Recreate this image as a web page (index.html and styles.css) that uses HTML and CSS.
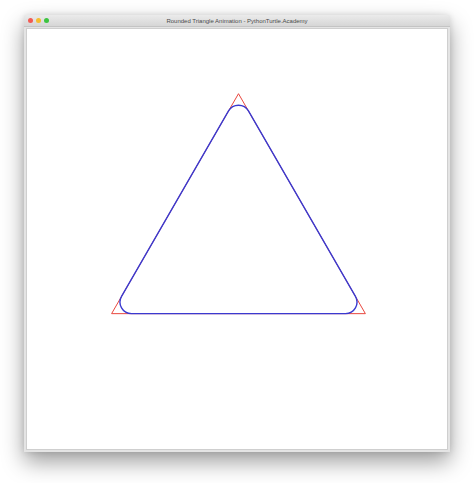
FILE: index.html
```html
<!DOCTYPE html>
<html>
<head>
<meta charset="utf-8">
<link rel="stylesheet" href="styles.css">
</head>
<body>
<div class="window">
  <div class="titlebar">
    <div class="lights">
      <span class="light red"></span>
      <span class="light yellow"></span>
      <span class="light green"></span>
    </div>
    <div class="title">Rounded Triangle Animation - PythonTurtle.Academy</div>
  </div>
  <div class="frame">
    <svg class="canvas" width="422" height="422" viewBox="0 0 422 422" xmlns="http://www.w3.org/2000/svg">
      <polygon points="212.5,65 85,286 340,286" fill="none" stroke="#e8453c" stroke-width="1"/>
      <path d="M 202.5 82.33 A 11.55 11.55 0 0 1 222.5 82.33 L 330 268.67 A 11.55 11.55 0 0 1 320 286 L 105 286 A 11.55 11.55 0 0 1 95 268.67 Z" fill="none" stroke="#3a3ad0" stroke-width="1.4"/>
    </svg>
  </div>
</div>
</body>
</html>
```
FILE: styles.css
```css
html, body {
  margin: 0;
  padding: 0;
  background: #ffffff;
}
body {
  width: 474px;
  height: 483px;
  overflow: hidden;
  padding-top: 15px;
  box-sizing: border-box;
}
.window {
  margin-left: 24px;
  width: 426px;
  height: 437px;
  background: #e4e4e4;
  display: flex;
  flex-direction: column;
  box-shadow: 0 10px 22px rgba(0, 0, 0, 0.38), 0 0 6px rgba(0, 0, 0, 0.12);
  border-radius: 3px 3px 0 0;
}
.titlebar {
  height: 12px;
  display: flex;
  align-items: center;
  position: relative;
  background: linear-gradient(#ebebeb, #d6d6d6);
  border-radius: 3px 3px 0 0;
  border-bottom: 1px solid #c4c4c4;
}
.lights {
  display: flex;
  gap: 3px;
  padding-left: 4px;
}
.light {
  width: 5px;
  height: 5px;
  border-radius: 50%;
  display: block;
}
.red { background: #f25a52; }
.yellow { background: #f5bd2f; }
.green { background: #3cc440; }
.title {
  position: absolute;
  left: 0;
  right: 0;
  top: 0;
  bottom: 0;
  text-align: center;
  font-family: "Liberation Sans", Arial, sans-serif;
  font-size: 6px;
  line-height: 12px;
  color: #4a4a4a;
}
.frame {
  flex: 1;
  padding: 1px 2px 2px 2px;
  display: flex;
}
.canvas {
  display: block;
  flex: 1;
  background: #ffffff;
  border: 1px solid #cfcfcf;
  box-sizing: border-box;
}
```
